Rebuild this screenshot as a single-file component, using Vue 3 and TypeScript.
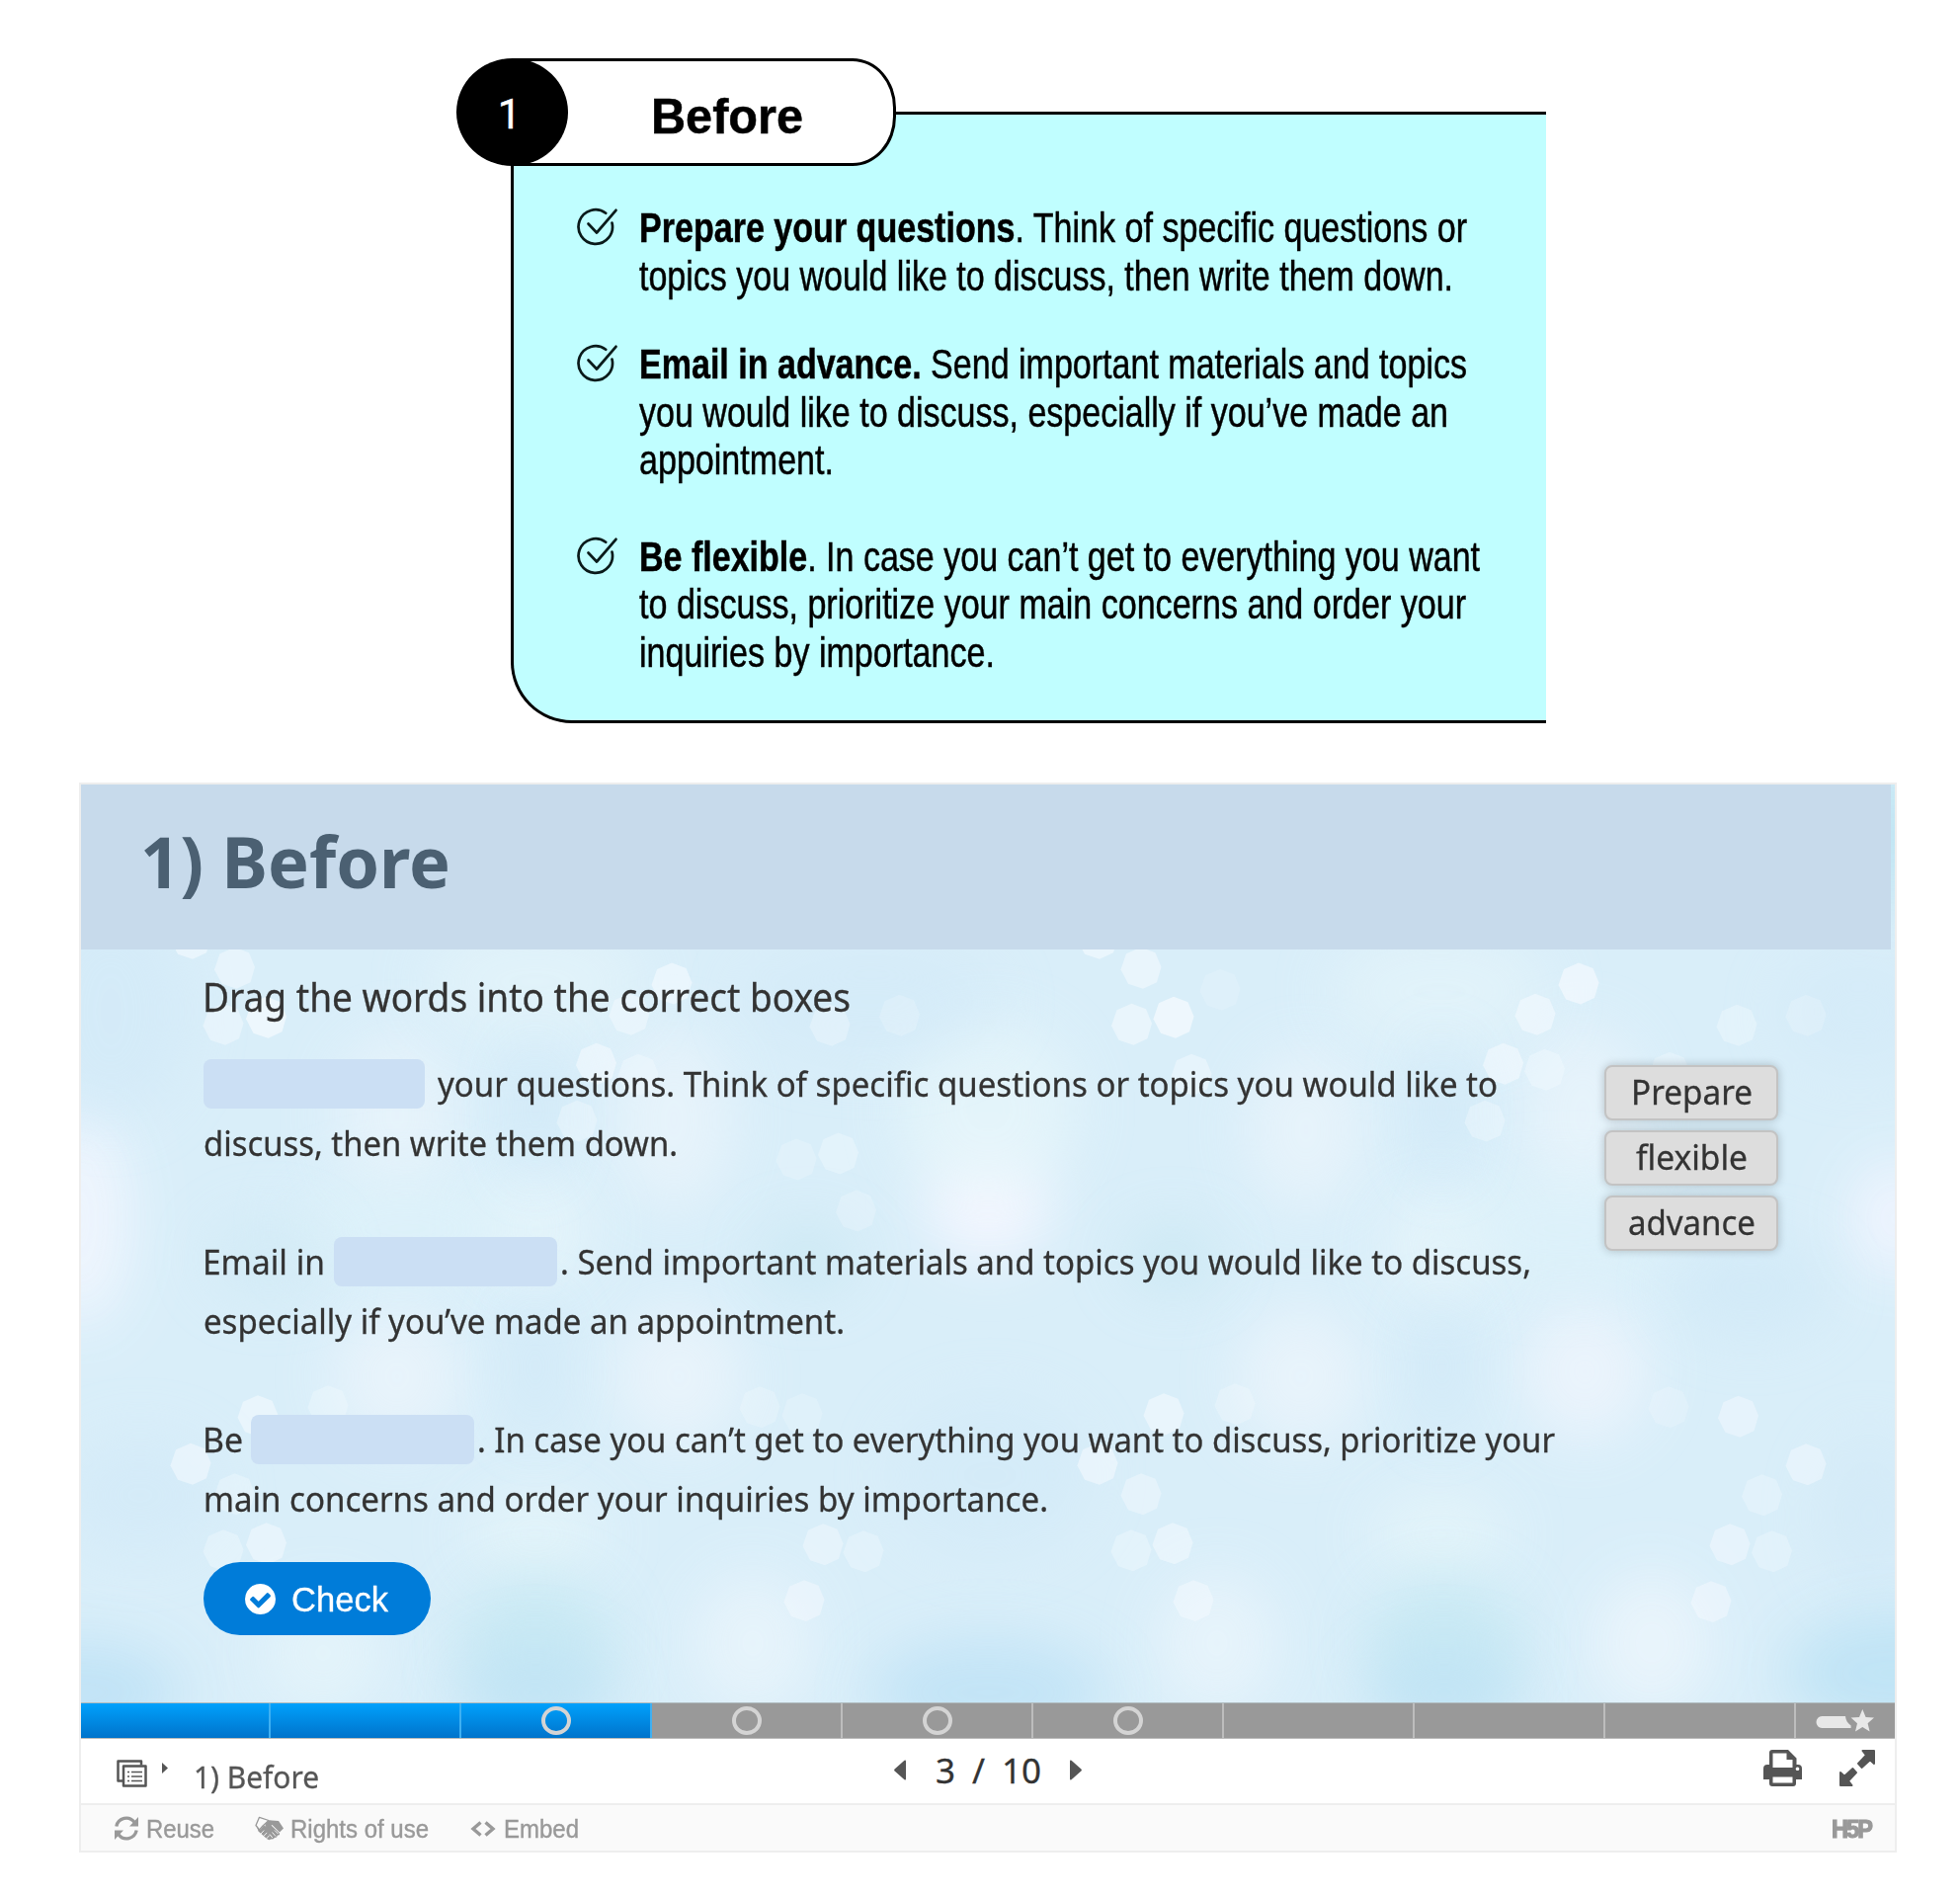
<script setup lang="ts">
interface Bokeh { x: number; y: number; o: number }
interface Glow { x: number; y: number; rx: number; ry: number; c: string; o: number }

// Stretches a line of text horizontally so that it fills the given width.
const vFit = {
  mounted(el: HTMLElement, binding: { value: number }) {
    const natural = el.getBoundingClientRect().width
    el.style.transform = `scaleX(${binding.value / natural})`
    el.style.marginRight = `${binding.value - natural}px`
  },
}

const tips = [
  [
    { bold: 'Prepare your questions', text: '. Think of specific questions or', w: 838 },
    { bold: '', text: 'topics you would like to discuss, then write them down.', w: 824 },
  ],
  [
    { bold: 'Email in advance.', text: ' Send important materials and topics', w: 838 },
    { bold: '', text: 'you would like to discuss, especially if you’ve made an', w: 819 },
    { bold: '', text: 'appointment.', w: 197 },
  ],
  [
    { bold: 'Be flexible', text: '. In case you can’t get to everything you want', w: 851 },
    { bold: '', text: 'to discuss, prioritize your main concerns and order your', w: 837 },
    { bold: '', text: 'inquiries by importance.', w: 360 },
  ],
]

const words = [
  { label: 'Prepare', w: 123 },
  { label: 'flexible', w: 113 },
  { label: 'advance', w: 129 },
]

const segments = [
  { done: true, task: false }, { done: true, task: false }, { done: true, task: true },
  { done: false, task: true }, { done: false, task: true }, { done: false, task: true },
  { done: false, task: false }, { done: false, task: false }, { done: false, task: false },
]

const glows: Glow[] = [
  { x: 0, y: 440, rx: 50, ry: 110, c: '#f1f6fe', o: 0.9 },
  { x: 918, y: 425, rx: 60, ry: 55, c: '#f4f6ff', o: 1 },
  { x: 918, y: 330, rx: 90, ry: 90, c: '#e8f7fb', o: 0.7 },
  { x: 1836, y: 440, rx: 45, ry: 60, c: '#f1f5ff', o: 0.9 },
  { x: 320, y: 335, rx: 60, ry: 80, c: '#ecf5fc', o: 0.7 },
  { x: 600, y: 340, rx: 60, ry: 90, c: '#ecf5fc', o: 0.7 },
  { x: 1240, y: 350, rx: 60, ry: 80, c: '#ecf5fc', o: 0.7 },
  { x: 1520, y: 335, rx: 60, ry: 90, c: '#ecf5fc', o: 0.7 },
  { x: 320, y: 600, rx: 65, ry: 70, c: '#edf5fc', o: 0.75 },
  { x: 605, y: 600, rx: 65, ry: 70, c: '#edf5fc', o: 0.75 },
  { x: 1235, y: 600, rx: 65, ry: 70, c: '#edf5fc', o: 0.75 },
  { x: 1522, y: 595, rx: 65, ry: 70, c: '#eff5fd', o: 0.8 },
  { x: 460, y: 200, rx: 110, ry: 60, c: '#e4f4fa', o: 0.7 },
  { x: 1375, y: 210, rx: 110, ry: 60, c: '#e4f4fa', o: 0.7 },
  { x: 460, y: 450, rx: 60, ry: 60, c: '#e6f5fb', o: 0.8 },
  { x: 1375, y: 470, rx: 60, ry: 60, c: '#e6f5fb', o: 0.8 },
  { x: 330, y: 450, rx: 120, ry: 60, c: '#dff3fa', o: 0.6 },
  { x: 1500, y: 450, rx: 120, ry: 60, c: '#dff3fa', o: 0.6 },
  { x: 460, y: 760, rx: 70, ry: 45, c: '#e5f5fa', o: 0.8 },
  { x: 1375, y: 760, rx: 70, ry: 45, c: '#e5f5fa', o: 0.8 },
  { x: 245, y: 880, rx: 60, ry: 60, c: '#e6f5fb', o: 0.8 },
  { x: 680, y: 870, rx: 60, ry: 70, c: '#eaf5fc', o: 0.8 },
  { x: 1150, y: 870, rx: 60, ry: 70, c: '#eaf5fc', o: 0.8 },
  { x: 1590, y: 870, rx: 60, ry: 70, c: '#ebf5fc', o: 0.9 },
  { x: 30, y: 230, rx: 80, ry: 110, c: '#d1e9f8', o: 0.6 },
  { x: 800, y: 220, rx: 130, ry: 60, c: '#d1e9f8', o: 0.5 },
  { x: 1800, y: 230, rx: 80, ry: 60, c: '#d1e9f8', o: 0.5 },
  { x: 460, y: 330, rx: 22, ry: 70, c: '#cde7f8', o: 0.7 },
  { x: 1378, y: 330, rx: 22, ry: 70, c: '#cde7f8', o: 0.7 },
  { x: 460, y: 590, rx: 22, ry: 70, c: '#cde7f8', o: 0.7 },
  { x: 1378, y: 590, rx: 22, ry: 70, c: '#cde7f8', o: 0.7 },
  { x: 190, y: 480, rx: 60, ry: 40, c: '#cfe9f4', o: 0.6 },
  { x: 735, y: 480, rx: 50, ry: 35, c: '#c8e7f2', o: 0.7 },
  { x: 1105, y: 480, rx: 50, ry: 35, c: '#c8e7f2', o: 0.7 },
  { x: 1690, y: 510, rx: 80, ry: 50, c: '#cfe8f7', o: 0.6 },
  { x: 60, y: 720, rx: 80, ry: 60, c: '#d1e9f8', o: 0.6 },
  { x: 920, y: 700, rx: 100, ry: 80, c: '#d0e9f8', o: 0.5 },
  { x: 1810, y: 740, rx: 50, ry: 80, c: '#cfe7f6', o: 0.5 },
  { x: 460, y: 870, rx: 80, ry: 70, c: '#c4e8f2', o: 0.7 },
  { x: 1380, y: 870, rx: 80, ry: 70, c: '#c4e8f2', o: 0.7 },
  { x: 460, y: 920, rx: 80, ry: 50, c: '#bde2f5', o: 0.7 },
  { x: 1380, y: 920, rx: 80, ry: 50, c: '#bde2f5', o: 0.7 },
  { x: 0, y: 920, rx: 100, ry: 50, c: '#bee2f6', o: 0.9 },
  { x: 918, y: 920, rx: 120, ry: 55, c: '#bee2f6', o: 0.8 },
  { x: 1836, y: 900, rx: 110, ry: 60, c: '#bee3f5', o: 0.9 },
  { x: 1834, y: 50, rx: 50, ry: 70, c: '#bfe5f3', o: 0.9 },
]

const bokehs: Bokeh[] = [
  [193, 949, .5], [237.5, 979, .42], [226, 1036, .4], [269.5, 1029, .6], [680, 994.7, .5], [637, 1026, .4],
  [603.5, 1076, .45], [646, 1087, .3], [584, 1134, .3], [1111, 949, .5], [1155, 979, .45], [1145.5, 1036, .45],
  [1188, 1029, .62], [1206, 1087, .4], [840, 1037, .3], [910.5, 1027, .2], [1235, 1001, .15], [848.5, 1167, .3],
  [806, 1173, .22], [866.5, 1225, .22], [1598, 994.7, .55], [1554, 1026, .45], [1521.6, 1076, .45], [1563.5, 1082, .3],
  [1503, 1134, .3], [1758, 1037, .3], [1828, 1027, .2], [1690, 1085, .28], [261, 1433, .45], [332, 1423, .28],
  [193, 1481.5, .45], [237.5, 1512, .3], [269.5, 1562, .42], [226, 1569, .3], [1689, 1424, .2], [1759.5, 1433.5, .38],
  [1828, 1482, .38], [1783.5, 1513, .28], [1751, 1563, .38], [1793.5, 1570, .28], [1732, 1621, .38], [1178, 1431, .45],
  [1250, 1421, .25], [1111, 1481.5, .45], [1155, 1512, .35], [1187, 1562, .42], [1145, 1569, .3], [1208, 1620, .4],
  [833, 1563, .35], [874, 1570, .28], [814, 1620, .38], [769, 1424, .22], [812, 1431, .2],
].map(([x, y, o]) => ({ x: x - 82, y: y - 793, o }))

const octagon = '0,-21 14.5,-15.5 20.5,-1 16,14.5 2,21 -13,16 -20.5,1.5 -15,-14.5'
</script>

<template>
  <main class="page">
    <section class="card">
      <div class="card-tab"><h2 v-fit="154" class="fit">Before</h2></div>
      <div class="card-number">1</div>
      <div v-for="(tip, i) in tips" :key="i" class="tip">
        <svg class="tip-icon" viewBox="0 0 42 40" fill="none" stroke="#0a1a1a" stroke-width="2.7" stroke-linecap="round" stroke-linejoin="round">
          <path d="M29.2 5.8A17.2 17.3 0 1 0 35.5 15.500" />
          <path d="M11.500 16.500L20 25.500L39.500 2.800" />
        </svg>
        <div class="tip-lines">
          <div v-for="line in tip" :key="line.text" class="tip-line">
            <span v-fit="line.w" class="fit"><b v-if="line.bold">{{ line.bold }}</b>{{ line.text }}</span>
          </div>
        </div>
      </div>
    </section>

    <section class="player">
      <div class="slide">
        <svg class="backdrop" viewBox="0 0 1836 930" preserveAspectRatio="none">
          <defs>
            <filter id="soft" x="-150%" y="-150%" width="400%" height="400%"><feGaussianBlur stdDeviation="28" /></filter>
          </defs>
          <rect width="1836" height="930" fill="#d9eef9" />
          <ellipse v-for="(g, i) in glows" :key="'g' + i" :cx="g.x" :cy="g.y" :rx="g.rx" :ry="g.ry" :fill="g.c" :opacity="g.o" filter="url(#soft)" />
          <polygon v-for="(b, i) in bokehs" :key="'b' + i" :points="octagon" :transform="`translate(${b.x} ${b.y})`" fill="#f7fbff" :opacity="b.o * 1.15" />
        </svg>
        <header class="slide-head"><h1 v-fit="314" class="fit">1) Before</h1></header>
        <div class="task">
          <div class="task-text">
            <p class="intro"><span v-fit="656" class="fit">Drag the words into the correct boxes</span></p>
            <div class="row"><i class="blank first"></i><span v-fit="1073" class="fit">your questions. Think of specific questions or topics you would like to</span></div>
            <div class="row"><span v-fit="480" class="fit">discuss, then write them down.</span></div>
            <div class="row gap"><span v-fit="124" class="fit low">Email in</span><i class="blank second"></i><span v-fit="983" class="fit">. Send important materials and topics you would like to discuss,</span></div>
            <div class="row"><span v-fit="649" class="fit">especially if you’ve made an appointment.</span></div>
            <div class="row gap"><span v-fit="41" class="fit low">Be</span><i class="blank third"></i><span v-fit="1091" class="fit">. In case you can’t get to everything you want to discuss, prioritize your</span></div>
            <div class="row"><span v-fit="855" class="fit">main concerns and order your inquiries by importance.</span></div>
            <button class="check">
              <svg viewBox="0 0 1536 1536" fill="#fff"><path d="M1284 606q0-28-18-46l-91-90q-19-19-45-19t-45 19l-408 407-226-226q-19-19-45-19t-45 19l-91 90q-18 18-18 46 0 27 18 45l362 362q19 19 45 19 27 0 46-19l543-543q18-18 18-45zm252 162q0 209-103 385.5t-279.5 279.5-385.5 103-385.5-103-279.5-279.5-103-385.5 103-385.5 279.5-279.5 385.5-103 385.5 103 279.5 279.5 103 385.5z" /></svg>
              <span v-fit="98" class="fit">Check</span>
            </button>
          </div>
          <div class="words">
            <div v-for="word in words" :key="word.label" class="word"><span v-fit="word.w" class="fit">{{ word.label }}</span></div>
          </div>
        </div>
      </div>

      <div class="progress">
        <div v-for="(s, i) in segments" :key="i" class="segment" :class="{ done: s.done }"><i v-if="s.task" class="dot"></i></div>
        <div class="segment last">
          <svg width="60" height="26" viewBox="0 0 60 26" fill="#e8e8e8">
            <path d="M7.2 8H31c.5 4.200 2.200 7 5.600 9.500V20H7.200a5.700 6 0 0 1 0-12z" />
            <path d="M48.300 1l3.300 7.900 8.400.7-6.400 5.600 2 8.300-7.300-4.400-7.300 4.400 2-8.300-6.400-5.600 8.400-.7z" />
          </svg>
        </div>
      </div>

      <nav class="nav">
        <div class="nav-left">
          <svg class="slides-icon" width="31" height="28" viewBox="0 0 31 28" fill="none" stroke="#555" stroke-width="2.500" stroke-linejoin="round">
            <path d="M6 21.500H1.500V1.500h23.500v4" />
            <rect x="7" y="6.500" width="22.500" height="20" />
            <path d="M15 12.500H26M15 17H26M15 21.500H26M11 12.500h2M11 17h2M11 21.500h2" stroke-width="1.700" />
          </svg>
          <svg class="caret" width="6" height="11" viewBox="0 0 6 11" fill="#555"><path d="M0 0l6 5.500-6 5.500z" /></svg>
          <span v-fit="127" class="fit nav-title">1) Before</span>
        </div>
        <div class="nav-mid">
          <svg width="12" height="21" viewBox="0 0 12 21" fill="#555"><path d="M12 1.500v18q0 1.500-1.500.700L.6 11.600q-1-1 0-2L10.500.8Q12 0 12 1.500z" /></svg>
          <span class="page-no">3</span><span class="slash">/</span><span class="page-total">10</span>
          <svg width="12" height="21" viewBox="0 0 12 21" fill="#555"><path d="M0 1.500v18q0 1.500 1.500.700l9.900-8.600q1-1 0-2L1.500.8Q0 0 0 1.500z" /></svg>
        </div>
        <div class="nav-right">
          <svg width="39" height="37" viewBox="0 0 39 37" fill="#555">
            <path fill-rule="evenodd" d="M6 3q0-3 3-3h16l8.500 8.500V15h1.500q4 0 4 4v11h-6v4q0 3-3 3H9q-3 0-3-3v-4H0V19q0-4 4-4h2zM9.500 3.500V18h20V10H23.500V3.500zM9.500 27.500V33.500h20V27.500zM34.500 17.500a1.800 1.800 0 1 0 .01 0z" />
          </svg>
          <svg width="36" height="37" viewBox="0 0 36 37" fill="#555" stroke="#555" stroke-linejoin="round">
            <path d="M23.500 1H35v13l-4-3.700-8.500 7.600-3.500-4 8-8.400zM12.500 36H1V23l4 3.700 8.500-7.600 3.500 4-8 8.400z" stroke-width="2" />
          </svg>
        </div>
      </nav>

      <footer class="foot">
        <svg class="reuse-icon" width="24" height="25" viewBox="0 0 24 25" fill="none" stroke="#999" stroke-width="3.300">
          <path d="M1.800 10.500A10.300 10.600 0 0 1 20 6.300M22.200 14.500A10.300 10.600 0 0 1 4 18.700" />
          <path d="M24 1v9.500h-9zM0 24v-9.500h9z" fill="#999" stroke="none" />
        </svg>
        <span v-fit="69" class="fit reuse">Reuse</span>
        <svg class="hands-icon" width="29" height="26" viewBox="0 0 29 26">
          <path d="M2 11L5.500 14L9 9.500Q12 12 16 9L25 17.500Q25.500 19.500 23 19.500Q22.500 22 20 22Q18.500 24 16 23.500Q14 25 12 23L3.500 15.500z" fill="#999" />
          <path d="M10.500 8.500Q13 3.500 17 4.500L24 5L29 12.500L25 16.500L17.500 9Q13.500 12.500 10.500 10.500z" fill="#999" />
          <path d="M4.500 1.300L14 4.500L8 10L4.500 14L1 9.500z" fill="#fafafa" stroke="#999" stroke-width="1.300" stroke-linejoin="round" />
          <path d="M6 18l3.200-3.400M8.800 20.500l3.400-3.600M11.500 23l3.200-3.400M17.500 16.500l3.500 4M15 18.500l2.800 3.500M20 14.500l3.500 3.500" stroke="#fafafa" stroke-width=".9" />
        </svg>
        <span v-fit="140" class="fit rights">Rights of use</span>
        <svg class="embed-icon" width="26" height="16" viewBox="0 0 26 16" fill="none" stroke="#999" stroke-width="3.400"><path d="M10.500 1.500L3 8l7.500 6.500M15.500 1.500L23 8l-7.500 6.500" /></svg>
        <span v-fit="76" class="fit">Embed</span>
        <div class="logo"><span v-fit="40" class="fit">H5P</span></div>
      </footer>
    </section>
  </main>
</template>

<style>
body { margin: 0; background: #fff; }
</style>

<style scoped>
* { box-sizing: border-box; }
.page { width: 1984px; height: 1920px; overflow: hidden; background: #fff; padding-top: 113px; }
.fit { display: inline-block; white-space: nowrap; transform-origin: left center; flex: none; }
h1, h2, p { margin: 0; }

.card {
  position: relative; width: 1048px; height: 619px; margin-left: 517px; padding: 91px 0 0 64px;
  background: #c0feff; border: 3px solid #000; border-right: 0; border-bottom-left-radius: 62px 62px;
  font-family: "Liberation Sans", Arial, sans-serif; color: #000;
}
.card-tab {
  position: absolute; left: -2px; top: -57px; width: 389px; height: 109px; padding: 1px 0 0 138px;
  display: flex; align-items: center; background: #fff; border: 3px solid #000; border-radius: 0 44px 44px 0 / 0 50px 50px 0;
}
.card-tab h2 { font-size: 50px; line-height: 56px; font-weight: 700; margin-top: 7px; -webkit-text-stroke: .5px #000; }
.card-number {
  position: absolute; left: -58px; top: -57px; width: 113px; height: 109px; border-radius: 50%; background: #000; color: #fff;
  font: 42px/114px Roboto, sans-serif; text-align: center; padding-right: 6px; -webkit-text-stroke: .4px #fff;
}
.tip { display: flex; }
.tip + .tip { margin-top: 41px; }
.tip + .tip + .tip { margin-top: 49px; }
.tip-icon { width: 42px; height: 40px; margin: 3px 21px 0 0; flex: none; }
.tip-line { height: 48.500px; line-height: 48.500px; font-size: 42.500px; -webkit-text-stroke: .5px #000; }

.player { width: 1840px; height: 1083px; margin: 60px 0 0 80px; border: 2px solid #eee; display: flex; flex-direction: column; font-family: "Noto Sans", sans-serif; color: #333; }
.slide { position: relative; height: 929px; flex: none; overflow: hidden; }
.backdrop { position: absolute; inset: 0; width: 100%; height: 100%; }
.slide-head { position: relative; width: 1832px; height: 167px; background: #c7daeb; padding: 22px 0 0 60px; color: #4b6072; }
.slide-head h1 { font-size: 72px; line-height: 110px; font-weight: 700; }
.task { position: relative; display: flex; }
.task-text { width: 1418px; padding-left: 124px; flex: none; -webkit-text-stroke: .3px; }
.intro { font-size: 39.500px; line-height: 60px; height: 106px; padding-top: 18px; margin-left: -1px; }
.row { display: flex; align-items: center; height: 60px; line-height: 60px; font-size: 35px; }
.row.gap { margin-top: 60px; }
.low { margin-left: -1px; }
.blank { height: 50px; border-radius: 8px; background: #cbdff4; flex: none; }
.first { width: 224px; margin-right: 13px; }
.second { width: 226px; margin: 0 3px 0 9px; }
.third { width: 226px; margin: 0 3px 0 8px; }
.check {
  display: flex; align-items: center; width: 230px; height: 74px; margin-top: 34px; padding: 1px 0 0 42px; border: 0; border-radius: 38px;
  background: #007cd9; color: #fff; font: 35px/40px "Liberation Sans", Arial, sans-serif; -webkit-text-stroke: .3px #fff;
}
.check svg { width: 31px; height: 31px; margin-right: 16px; flex: none; }
.words { padding: 117px 0 0 124px; display: flex; flex-direction: column; gap: 10px; -webkit-text-stroke: .3px; }
.word {
  width: 176px; height: 56px; display: flex; justify-content: center; border: 2px solid #c3c3c3; border-radius: 8px; background: #ddd;
  font-size: 34.500px; line-height: 50px; box-shadow: 0 0 10px rgba(0, 0, 0, .22);
}

.progress { height: 37px; display: flex; flex: none; background: #999; border-top: 1px solid #b0bcc0; border-bottom: 1px solid #bbb; }
.segment { width: 193px; border-right: 2px solid #bdbdbd; display: flex; align-items: center; justify-content: center; flex: none; }
.segment:first-child { width: 192px; }
.segment.done { background: linear-gradient(#00a1fc, #0073cb); border-right-color: #3fb0f2; }
.segment.last { width: auto; flex: 1; border: 0; justify-content: flex-start; padding-left: 19px; }
.dot { width: 30px; height: 29px; border: 4px solid #d4d4d4; border-radius: 50%; margin-top: -1px; }

.nav { height: 65px; flex: none; display: flex; background: #fff; }
.nav-left { width: 823px; display: flex; align-items: flex-start; padding: 21px 0 0 36px; }
.caret { margin: 3px 26px 0 15px; }
.nav-title { font-size: 31px; line-height: 42px; margin-top: -4px; color: #555; -webkit-text-stroke: .3px; }
.nav-mid { display: flex; align-items: center; width: 190px; font-size: 35px; line-height: 40px; height: 63px; color: #333; -webkit-text-stroke: .3px; }
.nav-mid svg { flex: none; }
.page-no { width: 20px; margin-left: 30px; }
.slash { width: 13px; margin-left: 17px; }
.page-total { width: 40px; margin: 0 29px 0 17px; }
.nav-right { flex: 1; display: flex; justify-content: flex-end; gap: 38px; padding: 11px 20px 0 0; }

.foot { flex: 1; display: flex; align-items: center; background: #fafafa; border-top: 2px solid #eee; padding: 1px 24px 0 34px; font: 25px/30px "Liberation Sans", Arial, sans-serif; color: #999; -webkit-text-stroke: .4px; }
.reuse-icon { margin-right: 8px; }
.hands-icon { margin-left: 41px; margin-right: 7px; }
.embed-icon { margin-left: 42px; margin-right: 8px; }
.logo { margin-left: auto; display: flex; font: 900 25px/26px "Liberation Sans", Arial, sans-serif; letter-spacing: -2px; -webkit-text-stroke: 1.200px #999; }
</style>
